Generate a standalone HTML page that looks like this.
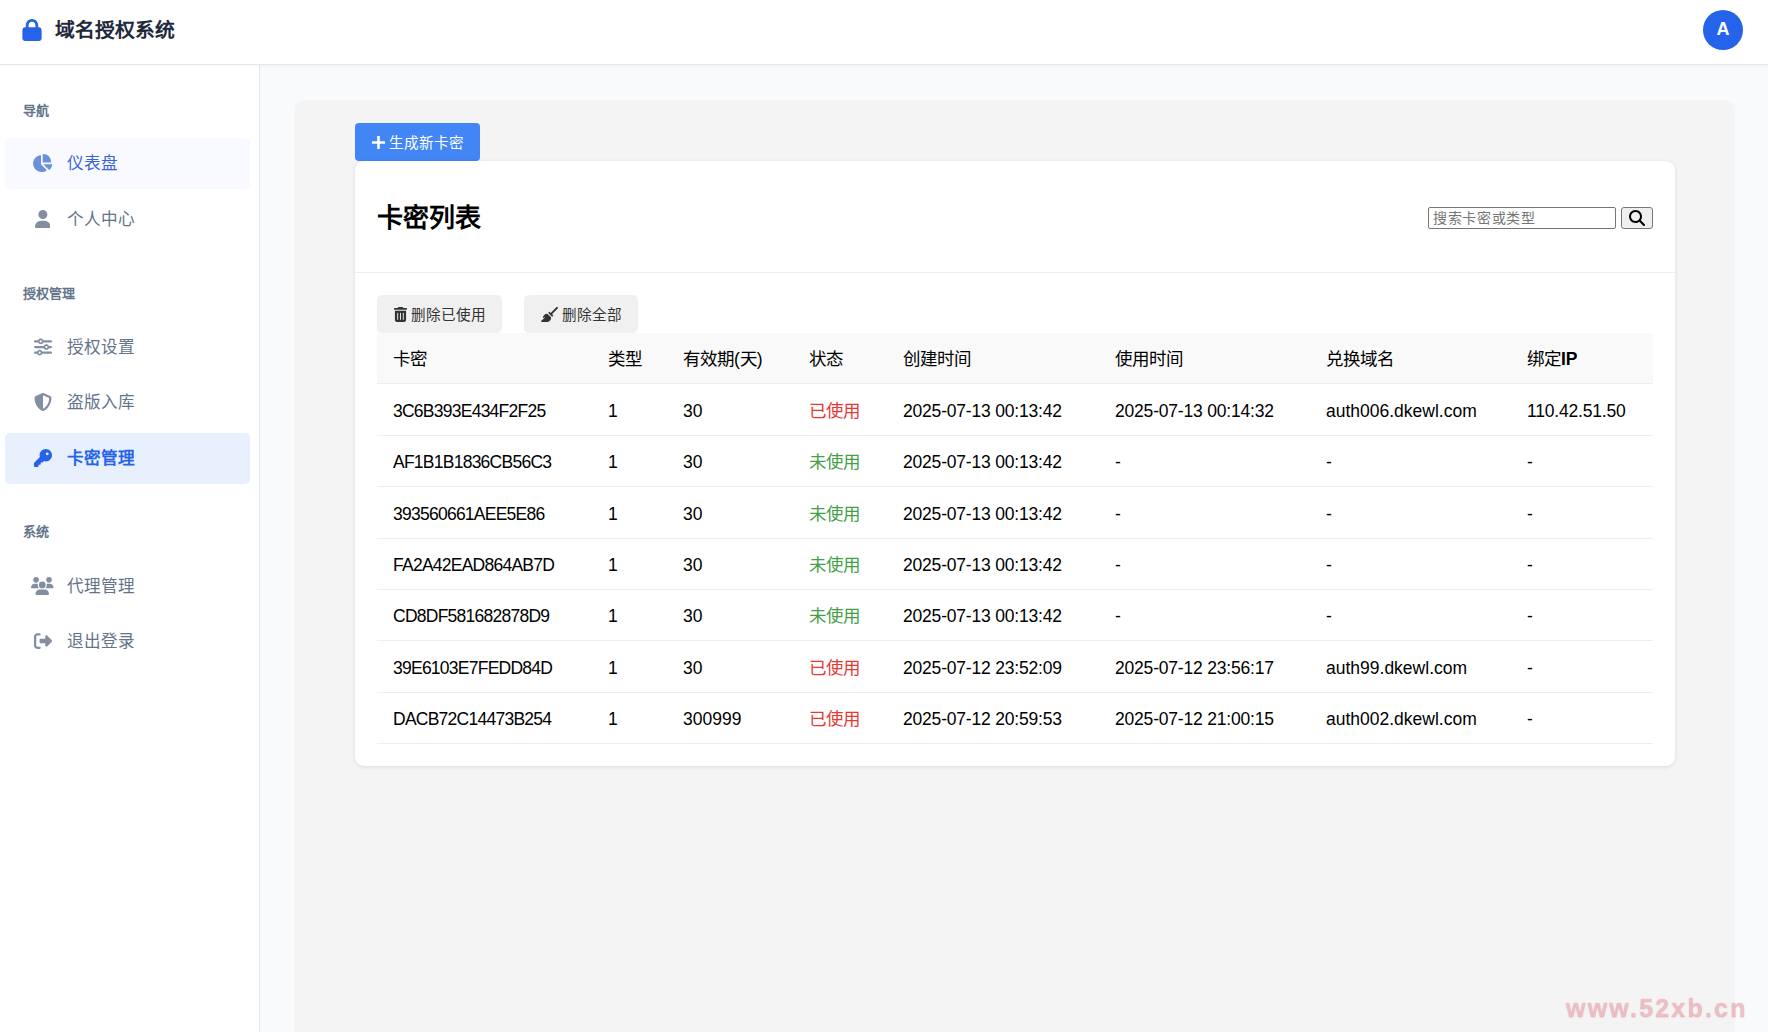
<!DOCTYPE html>
<html lang="zh-CN">
<head>
<meta charset="utf-8">
<title>卡密管理</title>
<style>
*{box-sizing:border-box;margin:0;padding:0}
html,body{width:1768px;height:1032px;overflow:hidden}
body{font-family:"Liberation Sans",sans-serif;background:#f8fafc;position:relative;color:#222}
.abs{position:absolute}
#header{left:0;top:0;width:1768px;height:65px;background:#fff;border-bottom:1px solid #e2e8f0;box-shadow:0 1px 3px rgba(0,0,0,.04);z-index:5}
#logo-ic{left:22px;top:19px;width:20px;height:22px}
#logo-t{left:55px;top:16px;font-size:19.8px;font-weight:bold;color:#1e293b;line-height:28px;white-space:nowrap}
#avatar{left:1703px;top:9.5px;width:40px;height:40px;border-radius:50%;background:#2563eb;color:#fff;font-weight:bold;font-size:18px;line-height:38px;text-align:center}
#sidebar{left:0;top:65px;width:260px;height:967px;background:#fff;border-right:1px solid #e2e8f0}
.lbl{left:23px;font-size:13px;font-weight:bold;color:#64748b;line-height:20px;white-space:nowrap}
.item{left:5px;width:245px;height:51px;border-radius:5px;white-space:nowrap}
.item .ic{position:absolute;top:16px;height:18px;fill:#64748b;opacity:.8}
.item .tx{position:absolute;left:62px;top:0;line-height:51px;font-size:16.6px;color:#64748b}
.item.hov{background:#f8faff}
.item.hov .tx{color:#3864d8}
.item.hov .ic{fill:#5b86d6;opacity:.9}
.item.act{background:#e8effd}
.item.act .tx{color:#2563eb;font-weight:bold}
.item.act .ic{fill:#2563eb;opacity:1}
#panel{left:295px;top:101px;width:1439px;height:1000px;background:#f4f4f4;border-radius:8px;box-shadow:0 0 3px rgba(0,0,0,.04)}
#newbtn{left:355px;top:123px;width:125px;height:38px;background:#4285f4;border-radius:4px;color:#fff;font-size:14.6px;line-height:40px;white-space:nowrap}
#card{left:355px;top:161px;width:1320px;height:605px;background:#fff;border-radius:9px;box-shadow:0 1px 4px rgba(0,0,0,.10)}
#ctitle{left:377px;top:200px;font-size:26px;font-weight:bold;color:#000;line-height:36px;white-space:nowrap}
#chead-line{left:355px;top:272px;width:1320px;height:1px;background:#eee}
#search{left:1428px;top:207px;width:188px;height:22px;border:1px solid #767676;border-radius:2px;background:#fff}
#search span{position:absolute;left:4px;top:0;line-height:20px;font-size:14px;letter-spacing:0.7px;color:#757575;white-space:nowrap}
#sbtn{left:1621px;top:207px;width:32px;height:22px;border:1px solid #767676;border-radius:3px;background:#efefef}
.tbtn{top:295px;height:38px;background:#f0f0f0;border-radius:5px;color:#333;font-size:14.6px;line-height:40px;white-space:nowrap}
#thead{left:377px;top:333px;width:1276px;height:50px;background:#f9f9f9}
.hl{left:377px;width:1276px;height:1px;background:#eee}
.c{position:absolute;font-size:17.5px;line-height:24px;white-space:nowrap;color:#000}
.red{color:#e53935}.green{color:#43a047}
#wm{left:1566px;top:993.5px;font-size:25px;line-height:28px;font-weight:bold;color:rgba(240,140,150,.45);letter-spacing:2.2px;-webkit-text-stroke:0.5px rgba(240,140,150,.45);white-space:nowrap;text-shadow:0 1px 2px rgba(0,0,0,.06)}
</style>
</head>
<body>
<div id="header" class="abs">
  <svg id="logo-ic" class="abs" viewBox="0 0 448 512"><path fill="#2563eb" d="M144 144v48H304V144c0-44.2-35.8-80-80-80s-80 35.8-80 80zM80 192V144C80 64.5 144.5 0 224 0s144 64.5 144 144v48h16c35.3 0 64 28.7 64 64V448c0 35.3-28.7 64-64 64H64c-35.3 0-64-28.7-64-64V256c0-35.3 28.7-64 64-64H80z"/></svg>
  <div id="logo-t" class="abs">域名授权系统</div>
  <div id="avatar" class="abs">A</div>
</div>

<div id="sidebar" class="abs"></div>
<div class="abs lbl" style="top:101px">导航</div>
<div class="abs lbl" style="top:284px">授权管理</div>
<div class="abs lbl" style="top:522px">系统</div>
<div class="abs item hov" style="top:138px"><svg class="ic" style="left:27.38px;width:20.25px" viewBox="0 0 576 512"><path d="M304 240V16.6c0-9 7-16.6 16-16.6C443.7 0 544 100.3 544 224c0 9-7.6 16-16.6 16H304zM32 272C32 150.7 122.1 50.3 239 34.3c9.2-1.3 17 6.1 17 15.4V288L412.5 444.5c6.7 6.7 6.2 17.7-1.5 23.1C371.8 495.6 323.8 512 272 512C139.5 512 32 404.6 32 272zm526.4 16c9.3 0 16.6 7.800 15.4 17c-7.7 55.9-34.6 105.6-73.9 142.3c-6 5.6-15.4 5.200-21.2-.7L320 288H558.4z"/></svg><span class="tx">仪表盘</span></div>
<div class="abs item " style="top:194px"><svg class="ic" style="left:29.62px;width:15.75px" viewBox="0 0 448 512"><path d="M224 256A128 128 0 1 0 224 0a128 128 0 1 0 0 256zm-45.7 48C79.8 304 0 383.8 0 482.3C0 498.7 13.3 512 29.7 512H418.3c16.4 0 29.7-13.3 29.7-29.7C448 383.8 368.2 304 269.7 304H178.3z"/></svg><span class="tx">个人中心</span></div>
<div class="abs item " style="top:322px"><svg class="ic" style="left:28.50px;width:18.00px" viewBox="0 0 512 512"><path d="M0 416c0 17.7 14.3 32 32 32l54.7 0c12.3 28.3 40.5 48 73.3 48s61-19.7 73.3-48L480 448c17.7 0 32-14.3 32-32s-14.3-32-32-32l-246.7 0c-12.3-28.3-40.5-48-73.3-48s-61 19.7-73.3 48L32 384c-17.7 0-32 14.3-32 32zm128 0a32 32 0 1 1 64 0 32 32 0 1 1 -64 0zM320 256a32 32 0 1 1 64 0 32 32 0 1 1 -64 0zm32-80c-32.8 0-61 19.7-73.3 48L32 224c-17.7 0-32 14.3-32 32s14.3 32 32 32l246.7 0c12.3 28.3 40.5 48 73.3 48s61-19.7 73.3-48l54.7 0c17.7 0 32-14.3 32-32s-14.3-32-32-32l-54.7 0c-12.3-28.3-40.5-48-73.3-48zM192 128a32 32 0 1 1 0-64 32 32 0 1 1 0 64zm73.3-64C253 35.7 224.8 16 192 16s-61 19.7-73.3 48L32 64C14.3 64 0 78.3 0 96s14.3 32 32 32l86.7 0c12.3 28.3 40.5 48 73.3 48s61-19.7 73.3-48L480 128c17.7 0 32-14.3 32-32s-14.3-32-32-32L265.3 64z"/></svg><span class="tx">授权设置</span></div>
<div class="abs item " style="top:377px"><svg class="ic" style="left:28.50px;width:18.00px" viewBox="0 0 512 512"><path d="M256 0c4.6 0 9.2 1 13.4 2.9L457.7 82.8c22 9.3 38.4 31 38.300 57.2c-.5 99.2-41.3 280.7-213.6 363.2c-16.7 8-36.1 8-52.8 0C57.3 420.7 16.5 239.2 16 140c-.1-26.2 16.3-47.9 38.3-57.2L242.7 2.9C246.8 1 251.4 0 256 0zm0 66.8V444.8C394 378 431.1 230.1 432 141.4L256 66.8l0 0z"/></svg><span class="tx">盗版入库</span></div>
<div class="abs item act" style="top:433px"><svg class="ic" style="left:28.50px;width:18.00px" viewBox="0 0 512 512"><path d="M336 352c97.2 0 176-78.8 176-176S433.2 0 336 0S160 78.8 160 176c0 18.7 2.9 36.8 8.3 53.7L7 391c-4.5 4.5-7 10.6-7 17v80c0 13.3 10.7 24 24 24h80c13.3 0 24-10.7 24-24V448h40c13.3 0 24-10.7 24-24V384h40c6.4 0 12.5-2.5 17-7l33.3-33.3c16.9 5.4 35 8.3 53.7 8.3zM376 96a40 40 0 1 1 0 80 40 40 0 1 1 0-80z"/></svg><span class="tx">卡密管理</span></div>
<div class="abs item " style="top:561px"><svg class="ic" style="left:26.25px;width:22.50px" viewBox="0 0 640 512"><path d="M144 0a80 80 0 1 1 0 160A80 80 0 1 1 144 0zM512 0a80 80 0 1 1 0 160A80 80 0 1 1 512 0zM0 298.7C0 239.8 47.8 192 106.7 192h42.7c15.9 0 31 3.5 44.6 9.7c-1.3 7.2-1.9 14.7-1.9 22.3c0 38.2 16.8 72.5 43.3 96c-.2 0-.4 0-.7 0H21.3C9.6 320 0 310.4 0 298.7zM405.3 320c-.2 0-.4 0-.7 0c26.6-23.5 43.3-57.8 43.3-96c0-7.6-.7-15-1.9-22.3c13.6-6.3 28.7-9.7 44.6-9.7h42.7C592.2 192 640 239.8 640 298.7c0 11.8-9.6 21.3-21.3 21.3H405.3zM224 224a96 96 0 1 1 192 0 96 96 0 1 1 -192 0zM128 485.3C128 411.7 187.7 352 261.3 352H378.7C452.3 352 512 411.7 512 485.3c0 14.7-11.900 26.7-26.7 26.7H154.7c-14.7 0-26.7-11.9-26.7-26.7z"/></svg><span class="tx">代理管理</span></div>
<div class="abs item " style="top:616px"><svg class="ic" style="left:28.50px;width:18.00px" viewBox="0 0 512 512"><path d="M377.9 105.9L500.7 228.7c7.2 7.2 11.3 17.1 11.3 27.3s-4.1 20.1-11.3 27.3L377.9 406.1c-6.4 6.4-15 9.9-24 9.9c-18.7 0-33.9-15.2-33.9-33.9l0-62.1-128 0c-17.7 0-32-14.3-32-32l0-64c0-17.7 14.3-32 32-32l128 0 0-62.1c0-18.7 15.2-33.9 33.9-33.9c9 0 17.6 3.6 24 9.9zM160 96L96 96c-17.7 0-32 14.3-32 32l0 256c0 17.7 14.3 32 32 32l64 0c17.7 0 32 14.3 32 32s-14.3 32-32 32l-64 0c-53 0-96-43-96-96L0 128C0 75 43 32 96 32l64 0c17.7 0 32 14.3 32 32s-14.3 32-32 32z"/></svg><span class="tx">退出登录</span></div>

<div id="panel" class="abs"></div>
<div id="newbtn" class="abs"><svg class="abs" style="left:17px;top:13px;width:13px;height:13px" viewBox="0 0 13 13"><path fill="#fff" d="M5.2 0h2.6v5.2H13v2.6H7.8V13H5.2V7.8H0V5.2h5.2z"/></svg><span class="abs" style="left:34px;top:0">生成新卡密</span></div>
<div id="card" class="abs"></div>
<div id="ctitle" class="abs">卡密列表</div>
<div id="chead-line" class="abs"></div>
<div id="search" class="abs"><span>搜索卡密或类型</span></div>
<div id="sbtn" class="abs"></div>
<svg class="abs" style="left:1629px;top:210px;width:16px;height:16px" viewBox="0 0 512 512"><path fill="#000" d="M416 208c0 45.9-14.9 88.3-40 122.7L502.6 457.4c12.5 12.5 12.5 32.8 0 45.3s-32.8 12.5-45.3 0L330.7 376c-34.4 25.2-76.8 40-122.7 40C93.1 416 0 322.9 0 208S93.1 0 208 0S416 93.1 416 208zM208 352a144 144 0 1 0 0-288 144 144 0 1 0 0 288z"/></svg>
<div class="abs tbtn" style="left:377px;width:125px"></div>
<svg class="abs" style="left:394px;top:307px;width:13px;height:15px" viewBox="0 0 448 512"><path fill="#333" d="M135.2 17.7C140.6 6.8 151.7 0 163.8 0H284.2c12.1 0 23.2 6.8 28.6 17.7L320 32h96c17.7 0 32 14.3 32 32s-14.3 32-32 32H32C14.3 96 0 81.7 0 64S14.3 32 32 32h96l7.2-14.3zM32 128H416V448c0 35.3-28.7 64-64 64H96c-35.3 0-64-28.7-64-64V128zm96 64c-8.8 0-16 7.2-16 16V432c0 8.8 7.2 16 16 16s16-7.2 16-16V208c0-8.8-7.2-16-16-16zm96 0c-8.8 0-16 7.2-16 16V432c0 8.8 7.2 16 16 16s16-7.2 16-16V208c0-8.8-7.2-16-16-16zm96 0c-8.8 0-16 7.2-16 16V432c0 8.8 7.2 16 16 16s16-7.2 16-16V208c0-8.8-7.2-16-16-16z"/></svg>
<div class="abs tbtn" style="left:411px;background:none">删除已使用</div>
<div class="abs tbtn" style="left:524px;width:114px"></div>
<svg class="abs" style="left:541px;top:307px;width:17px;height:15px" viewBox="0 0 576 512"><path fill="#333" d="M566.6 54.6c12.5-12.5 12.5-32.8 0-45.3s-32.8-12.5-45.3 0l-192 192-34.7-34.7c-4.2-4.2-10-6.6-16-6.6c-12.5 0-22.6 10.1-22.6 22.6v29.1L364.3 320h29.1c12.5 0 22.6-10.1 22.6-22.6c0-6-2.4-11.8-6.6-16l-34.7-34.7 192-192zM341.1 353.4L222.6 234.9c-42.7-3.7-85.2 11.7-115.8 42.3l-8 8C76.5 307.5 64 337.7 64 369.2c0 6.8 7.1 11.2 13.200 8.2l51.1-25.5c5-2.5 9.5 4.1 5.4 7.9L7.3 473.4C2.7 477.6 0 483.6 0 489.9C0 502.1 9.9 512 22.100 512l173.3 0c38.8 0 75.9-15.4 103.4-42.8c30.6-30.6 45.9-73.1 42.3-115.8z"/></svg>
<div class="abs tbtn" style="left:562px;background:none">删除全部</div>
<div id="thead" class="abs"></div>
<div class="abs hl" style="top:383px"></div>
<div class="abs hl" style="top:435px"></div>
<div class="abs hl" style="top:486px"></div>
<div class="abs hl" style="top:538px"></div>
<div class="abs hl" style="top:589px"></div>
<div class="abs hl" style="top:640px"></div>
<div class="abs hl" style="top:692px"></div>
<div class="abs hl" style="top:743px"></div>
<div class="c" style="left:393px;top:347px">卡密</div>
<div class="c" style="left:608px;top:347px">类型</div>
<div class="c" style="left:683px;top:347px">有效期(天)</div>
<div class="c" style="left:809px;top:347px">状态</div>
<div class="c" style="left:903px;top:347px">创建时间</div>
<div class="c" style="left:1115px;top:347px">使用时间</div>
<div class="c" style="left:1326px;top:347px">兑换域名</div>
<div class="c" style="left:1527px;top:347px">绑定<b>IP</b></div>
<div class="c" style="left:393px;top:398.5px;letter-spacing:-0.75px">3C6B393E434F2F25</div>
<div class="c" style="left:608px;top:398.5px">1</div>
<div class="c" style="left:683px;top:398.5px">30</div>
<div class="c red" style="left:809px;top:398.5px">已使用</div>
<div class="c" style="left:903px;top:398.5px;letter-spacing:-0.2px">2025-07-13 00:13:42</div>
<div class="c" style="left:1115px;top:398.5px;letter-spacing:-0.2px">2025-07-13 00:14:32</div>
<div class="c" style="left:1326px;top:398.5px">auth006.dkewl.com</div>
<div class="c" style="left:1527px;top:398.5px;letter-spacing:-0.2px">110.42.51.50</div>
<div class="c" style="left:393px;top:450px;letter-spacing:-0.75px">AF1B1B1836CB56C3</div>
<div class="c" style="left:608px;top:450px">1</div>
<div class="c" style="left:683px;top:450px">30</div>
<div class="c green" style="left:809px;top:450px">未使用</div>
<div class="c" style="left:903px;top:450px;letter-spacing:-0.2px">2025-07-13 00:13:42</div>
<div class="c" style="left:1115px;top:450px">-</div>
<div class="c" style="left:1326px;top:450px">-</div>
<div class="c" style="left:1527px;top:450px">-</div>
<div class="c" style="left:393px;top:501.5px;letter-spacing:-0.75px">393560661AEE5E86</div>
<div class="c" style="left:608px;top:501.5px">1</div>
<div class="c" style="left:683px;top:501.5px">30</div>
<div class="c green" style="left:809px;top:501.5px">未使用</div>
<div class="c" style="left:903px;top:501.5px;letter-spacing:-0.2px">2025-07-13 00:13:42</div>
<div class="c" style="left:1115px;top:501.5px">-</div>
<div class="c" style="left:1326px;top:501.5px">-</div>
<div class="c" style="left:1527px;top:501.5px">-</div>
<div class="c" style="left:393px;top:553px;letter-spacing:-0.75px">FA2A42EAD864AB7D</div>
<div class="c" style="left:608px;top:553px">1</div>
<div class="c" style="left:683px;top:553px">30</div>
<div class="c green" style="left:809px;top:553px">未使用</div>
<div class="c" style="left:903px;top:553px;letter-spacing:-0.2px">2025-07-13 00:13:42</div>
<div class="c" style="left:1115px;top:553px">-</div>
<div class="c" style="left:1326px;top:553px">-</div>
<div class="c" style="left:1527px;top:553px">-</div>
<div class="c" style="left:393px;top:604px;letter-spacing:-0.75px">CD8DF581682878D9</div>
<div class="c" style="left:608px;top:604px">1</div>
<div class="c" style="left:683px;top:604px">30</div>
<div class="c green" style="left:809px;top:604px">未使用</div>
<div class="c" style="left:903px;top:604px;letter-spacing:-0.2px">2025-07-13 00:13:42</div>
<div class="c" style="left:1115px;top:604px">-</div>
<div class="c" style="left:1326px;top:604px">-</div>
<div class="c" style="left:1527px;top:604px">-</div>
<div class="c" style="left:393px;top:655.5px;letter-spacing:-0.75px">39E6103E7FEDD84D</div>
<div class="c" style="left:608px;top:655.5px">1</div>
<div class="c" style="left:683px;top:655.5px">30</div>
<div class="c red" style="left:809px;top:655.5px">已使用</div>
<div class="c" style="left:903px;top:655.5px;letter-spacing:-0.2px">2025-07-12 23:52:09</div>
<div class="c" style="left:1115px;top:655.5px;letter-spacing:-0.2px">2025-07-12 23:56:17</div>
<div class="c" style="left:1326px;top:655.5px">auth99.dkewl.com</div>
<div class="c" style="left:1527px;top:655.5px">-</div>
<div class="c" style="left:393px;top:707px;letter-spacing:-0.75px">DACB72C14473B254</div>
<div class="c" style="left:608px;top:707px">1</div>
<div class="c" style="left:683px;top:707px">300999</div>
<div class="c red" style="left:809px;top:707px">已使用</div>
<div class="c" style="left:903px;top:707px;letter-spacing:-0.2px">2025-07-12 20:59:53</div>
<div class="c" style="left:1115px;top:707px;letter-spacing:-0.2px">2025-07-12 21:00:15</div>
<div class="c" style="left:1326px;top:707px">auth002.dkewl.com</div>
<div class="c" style="left:1527px;top:707px">-</div>

<div id="wm" class="abs">www.52xb.cn</div>
</body>
</html>
